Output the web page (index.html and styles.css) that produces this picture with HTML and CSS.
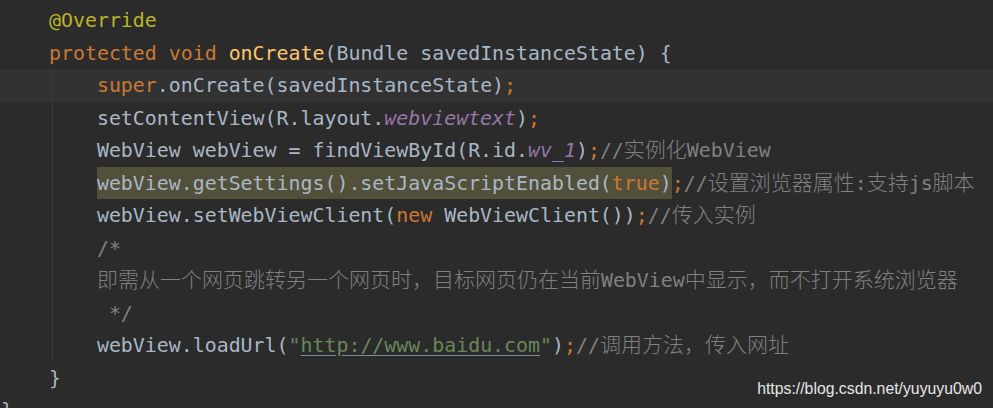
FILE: index.html
```html
<!DOCTYPE html>
<html lang="zh-CN">
<head>
    <meta charset="UTF-8">
    <title>MainActivity.java</title>
    <link rel="stylesheet" href="styles.css">
</head>
<body>
    <div class="editor">
        <div class="line"><span class="anno">@Override</span></div>
        <div class="line"><span class="kw">protected void </span><span class="fn">onCreate</span>(Bundle savedInstanceState) {</div>
        <div class="body">
            <div class="line current">    <span class="kw">super</span>.onCreate(savedInstanceState)<span class="kw">;</span></div>
            <div class="line">    setContentView(R.layout.<span class="field">webviewtext</span>)<span class="kw">;</span></div>
            <div class="line">    WebView webView = findViewById(R.id.<span class="field">wv_1</span>)<span class="kw">;</span><span class="cm">//<span class="zh">实例化</span>WebView</span></div>
            <div class="line">    <span class="hl">webView.getSettings().setJavaScriptEnabled(<span class="kw">true</span>)</span><span class="kw">;</span><span class="cm">//<span class="zh">设置浏览器属性</span>:<span class="zh">支持</span>js<span class="zh">脚本</span></span></div>
            <div class="line">    webView.setWebViewClient(<span class="kw">new </span>WebViewClient())<span class="kw">;</span><span class="cm">//<span class="zh">传入实例</span></span></div>
            <div class="line cm">    /*</div>
            <div class="line cm">    <span class="zh">即需从一个网页跳转另一个网页时，目标网页仍在当前</span>WebView<span class="zh">中显示，而不打开系统浏览器</span></div>
            <div class="line cm">     */</div>
            <div class="line">    webView.loadUrl(<span class="str">"<span class="link">http://www.baidu.com</span>"</span>)<span class="kw">;</span><span class="cm">//<span class="zh">调用方法，传入网址</span></span></div>
        </div>
        <div class="line">}</div>
        <div class="line outer">}</div>
        <div class="watermark">https://blog.csdn.net/yuyuyu0w0</div>
    </div>
</body>
</html>
```

FILE: styles.css
```css
html, body {
    margin: 0;
    background-color: #2b2b2b;
}
.editor {
    position: relative;
    height: 408px;
    overflow: hidden;
    padding-top: 4px;
    box-sizing: border-box;
    font-family: "DejaVu Sans Mono", "Noto Sans CJK SC", monospace;
    font-size: 19.9px;
    color: #a9b7c6;
}
.line {
    height: 32.5px;
    line-height: 34px;
    padding-left: 49px;
    white-space: pre;
}
.body .line {
    background: linear-gradient(#3b3b3b, #3b3b3b) 52px 0 / 1px 100% no-repeat;
}
.body .line.current {
    background: linear-gradient(#3b3b3b, #3b3b3b) 52px 0 / 1px 100% no-repeat, #323232;
}
.outer {
    margin-left: -48px;
}
.kw {
    color: #cc7832;
}
.anno {
    color: #bbb529;
}
.fn {
    color: #ffc66d;
}
.field {
    color: #9876aa;
    font-style: italic;
}
.cm {
    color: #808080;
}
.str {
    color: #6a8759;
}
.link {
    text-decoration: underline;
    text-decoration-color: #7f8b95;
    text-underline-offset: 3px;
}
.hl {
    background-color: #52503a;
    display: inline-block;
    height: 32.5px;
    vertical-align: top;
    line-height: 34px;
}
.zh {
    font-family: "Noto Sans CJK SC", sans-serif;
    font-size: 21px;
    font-weight: 300;
    line-height: 1;
}
.watermark {
    position: absolute;
    right: 11px;
    bottom: 10px;
    font-family: "Liberation Sans", Arial, sans-serif;
    font-size: 15.8px;
    color: #e6e6e6;
}
```
